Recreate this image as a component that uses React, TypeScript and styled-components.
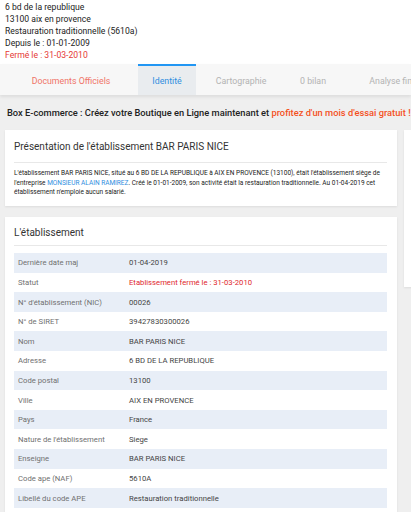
import React from "react"
import styled, { createGlobalStyle } from "styled-components"

const GlobalStyle = createGlobalStyle`
  html, body {
    margin: 0;
    padding: 0;
    overflow: hidden;
    background: #efefef;
    font-family: Roboto, "Liberation Sans", Arial, sans-serif;
  }
`

const tabs = [
  { label: "Documents Officiels", width: 134, kind: "docs" },
  { label: "Identité", width: 58, kind: "active" },
  { label: "Cartographie", width: 90, kind: "muted" },
  { label: "0 bilan", width: 54, kind: "muted" },
  { label: "Analyse financière", width: 130, kind: "muted" },
]

const rows: [string, string, boolean?][] = [
  ["Dernière date maj", "01-04-2019"],
  ["Statut", "Etablissement fermé le : 31-03-2010", true],
  ["N° d'établissement (NIC)", "00026"],
  ["N° de SIRET", "39427830300026"],
  ["Nom", "BAR PARIS NICE"],
  ["Adresse", "6 BD DE LA REPUBLIQUE"],
  ["Code postal", "13100"],
  ["Ville", "AIX EN PROVENCE"],
  ["Pays", "France"],
  ["Nature de l'établissement", "Siege"],
  ["Enseigne", "BAR PARIS NICE"],
  ["Code ape (NAF)", "5610A"],
  ["Libellé du code APE", "Restauration traditionnelle"],
]

const App = () => {
  return (
    <Page>
      <GlobalStyle />
      <Header>
        <div>6 bd de la republique</div>
        <div>13100 aix en provence</div>
        <div>Restauration traditionnelle (5610a)</div>
        <div>Depuis le : 01-01-2009</div>
        <Closed>Fermé le : 31-03-2010</Closed>
      </Header>

      <TabBar>
        {tabs.map((t) => (
          <Tab key={t.label} $w={t.width} $kind={t.kind}>
            {t.label}
          </Tab>
        ))}
      </TabBar>

      <Banner>
        Box E-commerce : Créez votre Boutique en Ligne maintenant et{" "}
        <Promo>profitez d'un mois d'essai gratuit !</Promo>
      </Banner>

      <Columns>
        <Main>
          <Card>
            <CardTitle>Présentation de l'établissement BAR PARIS NICE</CardTitle>
            <Summary>
              L'établissement BAR PARIS NICE, situé au 6 BD DE LA REPUBLIQUE à AIX EN PROVENCE
              (13100), était l'établissement siège de l'entreprise{" "}
              <Link>MONSIEUR ALAIN RAMIREZ</Link>. Créé le 01-01-2009, son activité était la
              restauration traditionnelle. Au 01-04-2019 cet établissement n'emploie aucun salarié.
            </Summary>
          </Card>

          <Card>
            <CardTitle $tight>L'établissement</CardTitle>
            <Table>
              {rows.map(([label, value, red], i) => (
                <Row key={label} $odd={i % 2 === 0}>
                  <Label>{label}</Label>
                  <Value $red={!!red}>{value}</Value>
                </Row>
              ))}
            </Table>
          </Card>
        </Main>
        <Side />
      </Columns>
    </Page>
  )
}

export default App

const Page = styled.div`
  width: 411px;
  height: 512px;
  overflow: hidden;
`

const Header = styled.div`
  background: #fff;
  padding: 1px 5px 3px;
  font-size: 8.6px;
  line-height: 12px;
  color: #222;
`

const Closed = styled.div`
  color: #e53935;
`

const TabBar = styled.div`
  display: flex;
  height: 31px;
  padding-left: 4px;
  background: #f7f7f7;
  box-shadow: 0 2px 3px rgba(0, 0, 0, 0.08);
  white-space: nowrap;
  position: relative;
`

const Tab = styled.div<{ $w: number; $kind: string }>`
  flex: 0 0 ${(p) => p.$w}px;
  display: flex;
  align-items: center;
  justify-content: center;
  font-size: 8.8px;
  box-sizing: border-box;
  border-top: 2px solid ${(p) => (p.$kind === "active" ? "#2196f3" : "transparent")};
  background: ${(p) => (p.$kind === "active" ? "#e9ecef" : "transparent")};
  color: ${(p) =>
    p.$kind === "active" ? "#2f8ee0" : p.$kind === "docs" ? "#f07467" : "#b3b3b3"};
`

const Banner = styled.div`
  padding: 11px 7px 11px;
  font-size: 9.3px;
  line-height: 13px;
  font-weight: 500;
  color: #222;
  white-space: nowrap;
`

const Promo = styled.span`
  color: #f4511e;
`

const Columns = styled.div`
  display: flex;
  gap: 7px;
  padding-left: 5px;
  align-items: flex-start;
`

const Main = styled.div`
  flex: 0 0 392px;
  display: flex;
  flex-direction: column;
  gap: 11px;
`

const Side = styled.div`
  flex: 0 0 200px;
  height: 157px;
  background: #fff;
  box-shadow: 0 1px 2px rgba(0, 0, 0, 0.08);
`

const Card = styled.div`
  background: #fff;
  padding: 8px 10px 8px 9px;
  box-shadow: 0 1px 2px rgba(0, 0, 0, 0.08);
`

const CardTitle = styled.div<{ $tight?: boolean }>`
  font-size: 10px;
  line-height: 14px;
  color: #333;
  padding-top: ${(p) => (p.$tight ? 1 : 2)}px;
  height: 16px;
  border-bottom: 1px solid #e8e8e8;
  padding-bottom: ${(p) => (p.$tight ? 3 : 6)}px;
  margin-bottom: ${(p) => (p.$tight ? 7 : 6)}px;
`

const Summary = styled.div`
  font-size: 6.5px;
  line-height: 9.7px;
  color: #222;
`

const Link = styled.span`
  color: #2f8ee0;
`

const Table = styled.div`
  display: flex;
  flex-direction: column;
  margin-top: 3px;
`

const Row = styled.div<{ $odd: boolean }>`
  display: flex;
  align-items: center;
  height: 19.6px;
  font-size: 7.7px;
  font-weight: 400;
  background: ${(p) => (p.$odd ? "#e8eef7" : "#fff")};
`

const Label = styled.div`
  flex: 0 0 111px;
  padding-left: 4px;
  color: #707070;
`

const Value = styled.div<{ $red: boolean }>`
  color: ${(p) => (p.$red ? "#e0262c" : "#444")};
`
